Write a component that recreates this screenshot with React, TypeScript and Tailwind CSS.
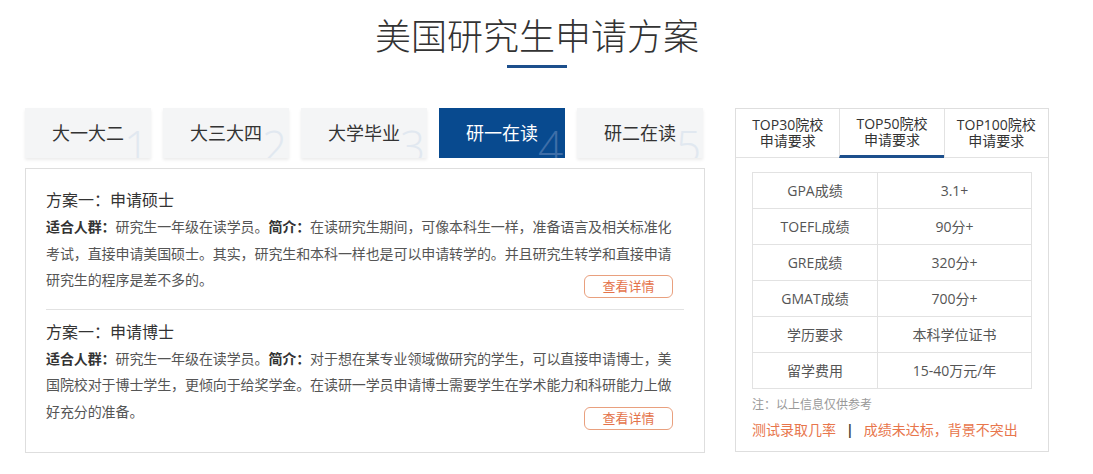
import React from "react";

const FONT = { fontFamily: '"Open Sans", "Noto Sans CJK SC", sans-serif' };

const TABS = ["大一大二", "大三大四", "大学毕业", "研一在读", "研二在读"];

const PLANS = [
  {
    title: "方案一：申请硕士",
    first: "在读研究生期间，可像本科生一样，准备语言及相关标准化",
    rest: ["考试，直接申请美国硕士。其实，研究生和本科一样也是可以申请转学的。并且研究生转学和直接申请", "研究生的程序是差不多的。"],
  },
  {
    title: "方案一：申请博士",
    first: "对于想在某专业领域做研究的学生，可以直接申请博士，美",
    rest: ["国院校对于博士学生，更倾向于给奖学金。在读研一学员申请博士需要学生在学术能力和科研能力上做", "好充分的准备。"],
  },
];

const RANKS = [
  ["TOP30院校", "申请要求"],
  ["TOP50院校", "申请要求"],
  ["TOP100院校", "申请要求"],
];

const REQS = [
  ["GPA成绩", "3.1+"],
  ["TOEFL成绩", "90分+"],
  ["GRE成绩", "320分+"],
  ["GMAT成绩", "700分+"],
  ["学历要求", "本科学位证书"],
  ["留学费用", "15-40万元/年"],
];

export default function App() {
  const active = 3;
  const rank = 1;

  return (
    <div className="w-[1093px] h-[474px] bg-white text-[#333]" style={FONT}>
      <div className="w-[1074px] flex flex-col items-center pt-[13px]">
        <h1 className="text-[36px] leading-[48px] font-light text-[#333]">美国研究生申请方案</h1>
        <div className="w-[60px] h-[3px] bg-[#1d4f8c] mt-[4px]" />
      </div>

      <div className="flex gap-[30px] pl-[25px] mt-[40px]">
        <div className="w-[680px]">
          <div className="flex gap-[12px] h-[50px]">
            {TABS.map((t, i) => (
              <div
                key={t}
                className={
                  i === active
                    ? "relative w-[126px] h-[50px] overflow-hidden bg-[#084a8f] text-white flex items-center justify-center text-[18px]"
                    : "relative w-[126px] h-[50px] overflow-hidden bg-[#f4f5f6] text-[#333] flex items-center justify-center text-[18px] shadow-[0_2px_3px_rgba(0,0,0,0.08)]"
                }
              >
                <span className="relative z-10">{t}</span>
                <span
                  className={
                    i === active
                      ? "absolute right-[2px] -bottom-[10px] text-[44px] font-light leading-none text-[#3e6ea8]"
                      : "absolute right-[2px] -bottom-[10px] text-[44px] font-light leading-none text-[#e1e8f0]"
                  }
                >
                  {i + 1}
                </span>
              </div>
            ))}
          </div>

          <div className="mt-[10px] border border-[#dedede] px-[20px] pt-[19px] pb-[22px]">
            {PLANS.map((p, i) => (
              <div key={i} className={i > 0 ? "border-t border-[#e2e2e2] pt-[10px]" : ""}>
                <h3 className="text-[16px] leading-[24px] text-[#333]">{p.title}</h3>
                <div className="mt-[2px] text-[14px] leading-[26.5px] text-[#555] tracking-[-0.1px] whitespace-nowrap">
                  <p>
                    <b className="text-[#333]">适合人群：</b>研究生一年级在读学员。
                    <b className="text-[#333]">简介：</b>
                    {p.first}
                  </p>
                  {p.rest.map((l) => (
                    <p key={l}>{l}</p>
                  ))}
                </div>
                <div className={i === 0 ? "flex justify-end -mt-[18.5px] mb-[10.5px] pr-[11px]" : "flex justify-end -mt-[18.5px] pr-[11px]"}>
                  <button className="w-[89px] h-[23px] rounded-[6px] border border-[#e9a07e] text-[#e4734a] text-[13px] leading-none">
                    查看详情
                  </button>
                </div>
              </div>
            ))}
          </div>
        </div>

        <div className="w-[314px] h-[344px] border border-[#dedede] flex flex-col">
          <div className="flex border-b border-[#e2e2e2] h-[49px]">
            {RANKS.map((r, i) => (
              <div
                key={i}
                className={
                  (i === rank
                    ? "border-b-[3px] border-[#1d4f8c] -mb-px "
                    : "") +
                  (i > 0 ? "border-l border-l-[#e2e2e2] " : "") +
                  "flex-1 flex flex-col items-center justify-center text-[14px] leading-[16.5px] text-[#333]"
                }
              >
                <span>{r[0]}</span>
                <span>{r[1]}</span>
              </div>
            ))}
          </div>

          <div className="px-[16px] pt-[14px]">
            <table className="w-[280px] border-collapse text-[14px] text-[#555]">
              <tbody>
                {REQS.map(([k, v]) => (
                  <tr key={k} className="h-[36px]">
                    <td className="w-[125px] border border-[#e2e2e2] text-center">{k}</td>
                    <td className="border border-[#e2e2e2] text-center">{v}</td>
                  </tr>
                ))}
              </tbody>
            </table>
            <p className="mt-[6px] text-[12px] leading-[20px] text-[#999]">注：以上信息仅供参考</p>
            <p className="mt-[5px] text-[14px] leading-[20px] text-[#e8764c] flex gap-[10px]">
              <span>测试录取几率</span>
              <span className="text-[#444] font-bold">|</span>
              <span>成绩未达标，背景不突出</span>
            </p>
          </div>
        </div>
      </div>
    </div>
  );
}
